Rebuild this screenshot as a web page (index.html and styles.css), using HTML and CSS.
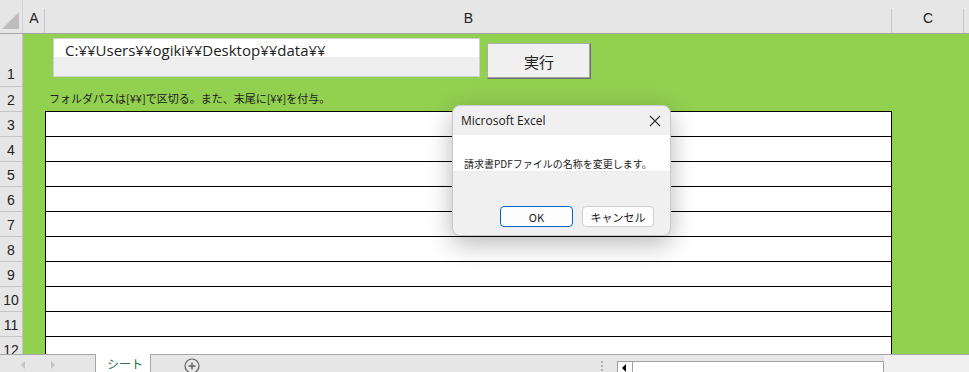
FILE: index.html
```html
<!DOCTYPE html>
<html lang="ja">
<head>
    <meta charset="UTF-8">
    <title>Excel - シート</title>
    <link rel="stylesheet" href="styles.css">
</head>
<body>

<div class="app">
    <div class="colheads">
        <div class="corner"><span class="corner-tri"></span></div>
        <div class="colhead col-a">A</div>
        <div class="colhead col-b">B</div>
        <div class="colhead col-c">C</div>
        <div class="colhead col-rest"></div>
    </div>

    <div class="sheet">
        <div class="rowheads">
            <div class="rh rh-1">1</div>
            <div class="rh rh-2">2</div>
            <div class="rh">3</div>
            <div class="rh">4</div>
            <div class="rh">5</div>
            <div class="rh">6</div>
            <div class="rh">7</div>
            <div class="rh">8</div>
            <div class="rh">9</div>
            <div class="rh">10</div>
            <div class="rh">11</div>
            <div class="rh">12</div>
        </div>

        <div class="canvas">
            <div class="row-path">
                <div class="pathbox"><span class="pathbox-text">C:¥¥Users¥¥ogiki¥¥Desktop¥¥data¥¥</span></div>
                <button class="run-button">実行</button>
            </div>
            <div class="row-note">フォルダパスは[¥¥]で区切る。また、末尾に[¥¥]を付与。</div>
            <div class="file-table">
                <div class="file-row"></div>
                <div class="file-row"></div>
                <div class="file-row"></div>
                <div class="file-row"></div>
                <div class="file-row"></div>
                <div class="file-row"></div>
                <div class="file-row"></div>
                <div class="file-row"></div>
                <div class="file-row"></div>
                <div class="file-row"></div>
            </div>
        </div>
    </div>

    <div class="tabbar">
        <div class="tab-nav">
            <span class="nav-arrow nav-left"></span>
            <span class="nav-arrow nav-right"></span>
        </div>
        <div class="sheet-tab">シート</div>
        <div class="tab-fill">
            <svg class="add-sheet" width="16" height="16" viewBox="0 0 16 16">
                <circle cx="8" cy="8" r="7" fill="none" stroke="#606060" stroke-width="1.2"/>
                <path d="M8 4.5v7M4.5 8h7" stroke="#606060" stroke-width="1.4"/>
            </svg>
            <span class="split-dots"></span>
        </div>
        <div class="hscroll">
            <div class="hscroll-box">
                <span class="hscroll-btn"><span class="hscroll-arrow"></span></span>
            </div>
        </div>
        <div class="tab-rest"></div>
    </div>

    <!-- message box sits over the sheet -->
    <div class="dialog">
        <div class="dialog-title">
            <span>Microsoft Excel</span>
            <svg class="dialog-close" width="12" height="12" viewBox="0 0 12 12">
                <path d="M1 1L11 11M11 1L1 11" stroke="#333" stroke-width="1.1"/>
            </svg>
        </div>
        <div class="dialog-body">請求書PDFファイルの名称を変更します。</div>
        <div class="dialog-footer">
            <button class="dlg-btn dlg-ok">OK</button>
            <button class="dlg-btn">キャンセル</button>
        </div>
    </div>
</div>

</body>
</html>
```

FILE: styles.css
```css
body {
    margin: 0;
    font-family: "Liberation Sans", Arial, sans-serif;
    overflow: hidden;
}

.app {
    position: relative;
    width: 969px;
    height: 372px;
    overflow: hidden;
    background: #92d050;
}

/* column headers */
.colheads {
    display: flex;
    height: 34px;
    background: #e6e6e6;
    border-bottom: 1px solid #a6a6a6;
    box-sizing: border-box;
}

.corner {
    width: 23px;
    position: relative;
    border-right: 1px solid #d4d4d4;
    box-sizing: border-box;
}

.corner-tri {
    position: absolute;
    right: 3px;
    bottom: 4px;
    width: 0;
    height: 0;
    border-left: 17px solid transparent;
    border-bottom: 17px solid #bdbdbd;
}

.colhead {
    display: flex;
    align-items: center;
    justify-content: center;
    padding-top: 2px;
    font-size: 14px;
    color: #222;
    box-sizing: border-box;
    position: relative;
}

.colhead::after {
    content: "";
    position: absolute;
    right: 0;
    top: 9px;
    bottom: 0;
    border-right: 1px solid #c6c6c6;
}

.col-a { width: 22px; }
.col-b { width: 847px; }
.col-c { width: 72px; }
.col-rest { flex: 1; }
.col-rest::after { display: none; }

/* sheet body */
.sheet {
    display: flex;
    height: 320px;
    overflow: hidden;
}

.rowheads {
    width: 23px;
    background: #e6e6e6;
    border-right: 1px solid #c6c6c6;
    box-sizing: border-box;
    flex-shrink: 0;
}

.rh {
    height: 25px;
    border-bottom: 1px solid #c6c6c6;
    box-sizing: border-box;
    display: flex;
    align-items: center;
    justify-content: center;
    font-size: 14px;
    color: #222;
    padding-top: 1px;
}

.rh-1 {
    height: 53px;
    align-items: flex-end;
    padding-bottom: 4px;
}

.canvas {
    flex: 1;
}

.row-path {
    display: flex;
    height: 52px;
}

.pathbox {
    margin: 4px 0 0 30px;
    width: 427px;
    height: 39px;
    border: 1px solid #cfcfcf;
    box-sizing: border-box;
    background: linear-gradient(#ffffff 0, #ffffff 18px, #efefef 18px);
    padding: 0 0 0 11px;
    line-height: 22px;
}

.pathbox-text {
    font-family: "Open Sans", "Liberation Sans", sans-serif;
    font-size: 15px;
    color: #222;
}

.run-button {
    margin: 9px 0 0 7px;
    width: 104px;
    height: 36px;
    background: #f0f0f0;
    border: 1px solid #adadad;
    border-right-color: #6e6e6e;
    border-bottom-color: #6e6e6e;
    box-shadow: inset -1px -1px 0 #a0a0a0;
    font-family: "Noto Sans CJK JP", sans-serif;
    font-size: 15px;
    color: #222;
    padding: 0;
}

.row-note {
    height: 25px;
    padding: 6px 0 0 26px;
    box-sizing: border-box;
    font-family: "Noto Sans CJK JP", sans-serif;
    font-size: 11px;
    line-height: 12px;
    color: #222;
    white-space: nowrap;
}

.file-table {
    margin-left: 22px;
    width: 847px;
    border: 1px solid #000;
    border-bottom: none;
    background: #fff;
    box-sizing: border-box;
}

.file-row {
    height: 25px;
    border-bottom: 1px solid #000;
    box-sizing: border-box;
}

/* sheet tabs */
.tabbar {
    display: flex;
    height: 18px;
    background: #e6e6e6;
}

.tab-nav {
    width: 96px;
    border-top: 1px solid #a6a6a6;
    border-right: 1px solid #a6a6a6;
    box-sizing: border-box;
    position: relative;
}

.nav-arrow {
    position: absolute;
    top: 6px;
    width: 0;
    height: 0;
    border-top: 4px solid transparent;
    border-bottom: 4px solid transparent;
}

.nav-left {
    left: 21px;
    border-right: 4px solid #c4c4c4;
}

.nav-right {
    left: 51px;
    border-left: 4px solid #c4c4c4;
}

.sheet-tab {
    width: 54px;
    background: #fff;
    font-family: "Noto Sans CJK JP", sans-serif;
    font-size: 12px;
    color: #217346;
    padding: 3px 0 0 11px;
    box-sizing: border-box;
    line-height: 14px;
}

.tab-fill {
    width: 467px;
    border-top: 1px solid #a6a6a6;
    border-left: 1px solid #a6a6a6;
    box-sizing: border-box;
    position: relative;
}

.add-sheet {
    position: absolute;
    left: 33px;
    top: 3px;
}

.split-dots {
    position: absolute;
    left: 450px;
    top: 6px;
    width: 2px;
    height: 12px;
    background: repeating-linear-gradient(#b0b0b0 0, #b0b0b0 2px, transparent 2px, transparent 4px);
}

.hscroll {
    width: 267px;
    border-top: 1px solid #a6a6a6;
    box-sizing: border-box;
    padding-top: 6px;
}

.hscroll-box {
    height: 12px;
    background: #fff;
    border: 1px solid #a0a0a0;
    border-bottom: none;
    box-sizing: border-box;
    display: flex;
}

.hscroll-btn {
    width: 15px;
    border-right: 1px solid #a0a0a0;
    box-sizing: border-box;
    position: relative;
}

.hscroll-arrow {
    position: absolute;
    left: 4px;
    top: 2px;
    width: 0;
    height: 0;
    border-top: 4px solid transparent;
    border-bottom: 4px solid transparent;
    border-right: 4px solid #000;
}

.tab-rest {
    flex: 1;
    background: #f0f0f0;
    border-top: 1px solid #a6a6a6;
}

/* message box */
.dialog {
    position: absolute;
    left: 452px;
    top: 105px;
    width: 219px;
    height: 131px;
    background: #f0f0f0;
    border: 1px solid #c9c9c9;
    border-radius: 8px;
    box-sizing: border-box;
    box-shadow: 0 8px 26px rgba(0, 0, 0, 0.28);
    overflow: hidden;
    font-family: "Noto Sans CJK JP", "Liberation Sans", sans-serif;
    color: #1a1a1a;
}

.dialog-title {
    height: 29px;
    display: flex;
    align-items: center;
    justify-content: space-between;
    padding: 0 8px 0 8px;
    font-family: "Open Sans", "Liberation Sans", sans-serif;
    font-size: 12px;
    box-sizing: border-box;
}

.dialog-close {
    margin-right: 1px;
}

.dialog-body {
    height: 36px;
    background: #fff;
    font-size: 10px;
    padding: 23px 0 0 11px;
    box-sizing: border-box;
    line-height: 12px;
    white-space: nowrap;
}

.dialog-footer {
    display: flex;
    gap: 9px;
    padding: 34px 0 0 47px;
    border-top: 1px solid #ececec;
    box-sizing: border-box;
}

.dlg-btn {
    width: 72px;
    height: 21px;
    background: #fdfdfd;
    border: 1px solid #d0d0d0;
    border-radius: 4px;
    font-family: "Noto Sans CJK JP", "Liberation Sans", sans-serif;
    font-size: 11px;
    color: #1a1a1a;
    padding: 0;
}

.dlg-ok {
    border-color: #0067c0;
    width: 73px;
}
```
